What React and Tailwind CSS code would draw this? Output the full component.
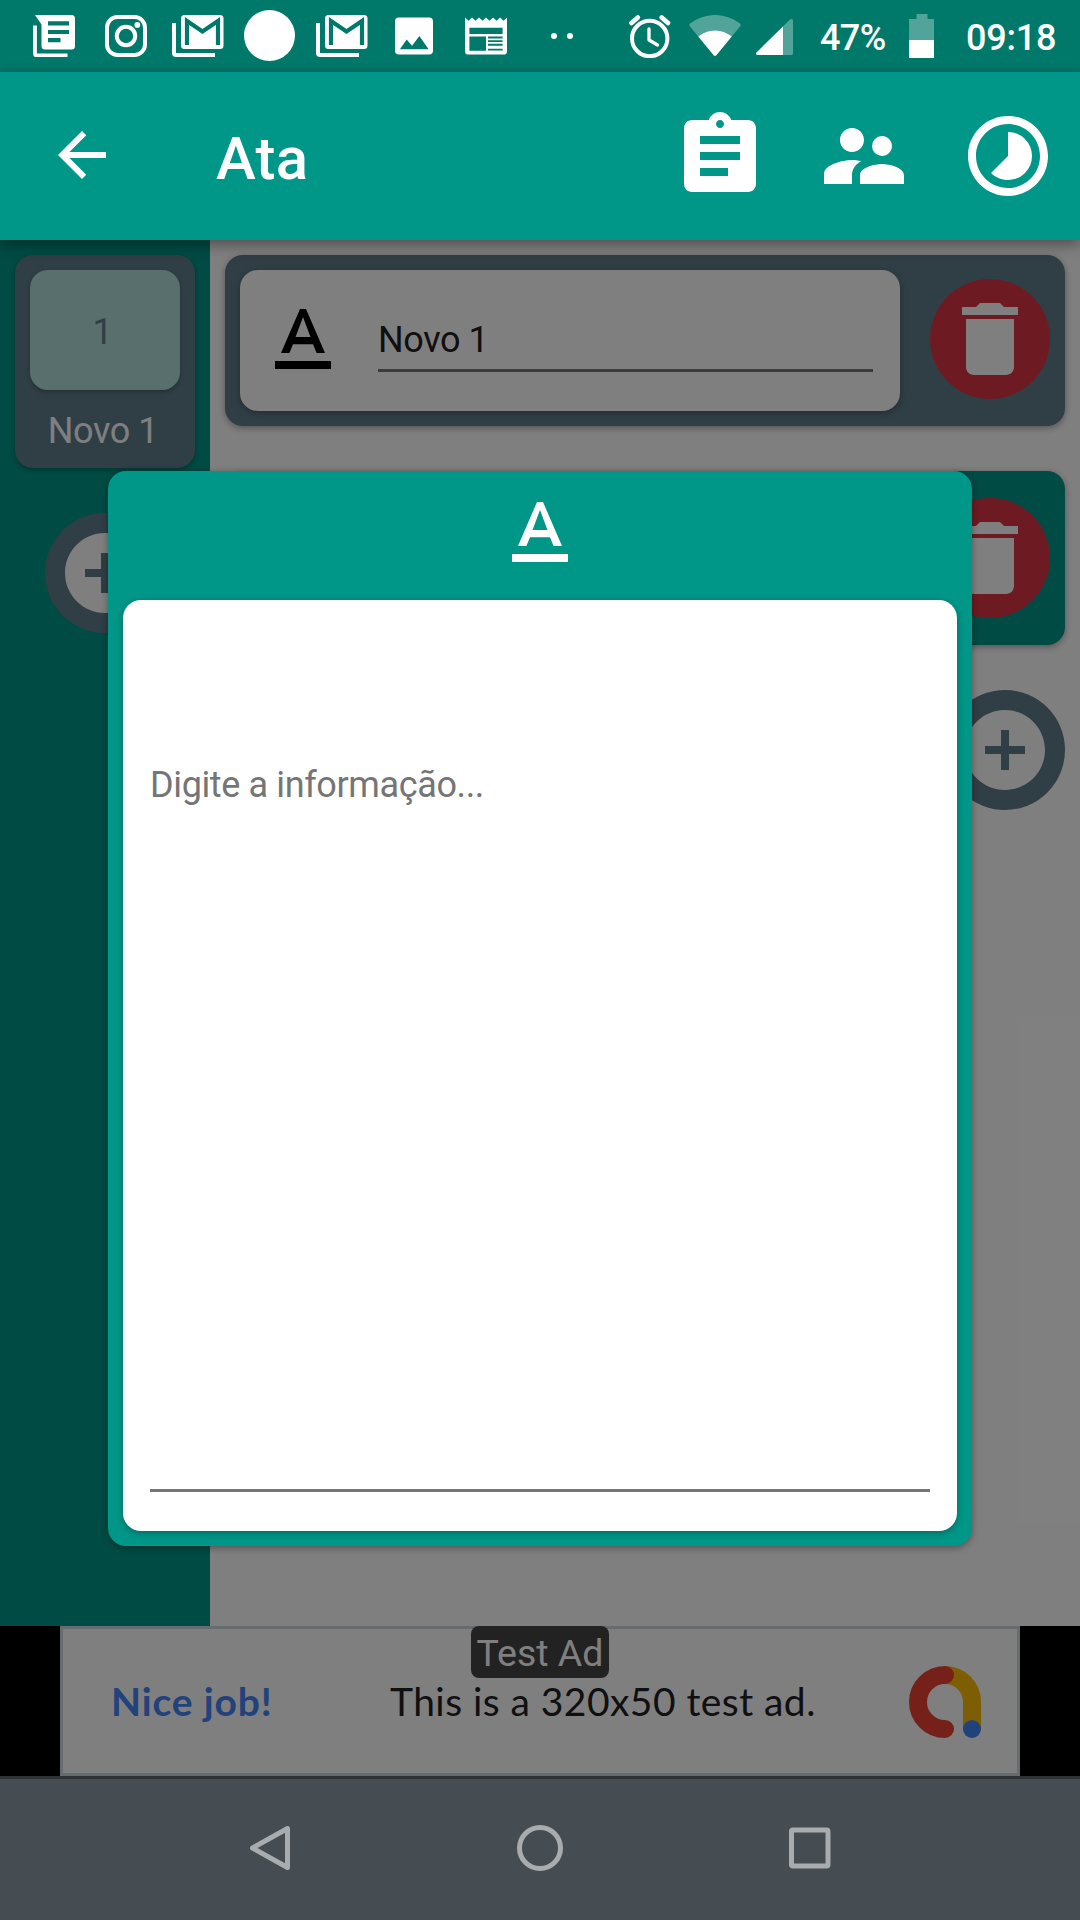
import React from "react";
import {
  MdArrowBack,
  MdAssignment,
  MdSupervisorAccount,
  MdTimelapse,
  MdTextFormat,
  MdDelete,
  MdAddCircle,
} from "react-icons/md";

function GmailIcon() {
  return (
    <svg className="h-[42px] w-[52px]" viewBox="0 0 52 42">
      <path d="M2 8v30a2 2 0 0 0 2 2h39" fill="none" stroke="#fff" strokeWidth="4" />
      <rect x="9" y="0" width="42.500" height="34" rx="3.5" fill="#fff" />
      <path d="M15 30V6l15.500 10.500L46 6v24" fill="none" stroke="#00796b" strokeWidth="4.200" />
    </svg>
  );
}

function StatusBar() {
  return (
    <header className="flex h-[72px] shrink-0 items-center bg-[#00796b] text-white">
      <div className="ml-[33px] flex h-full w-[475px] items-center">
        <svg className="h-[42px] w-[42px] shrink-0" viewBox="0 0 42 42">
          <path d="M2 10.500v28a2 2 0 0 0 2 2h30.500" fill="none" stroke="#fff" strokeWidth="3.800" />
          <path d="M2 0H38.500a3.500 3.500 0 0 1 3.500 3.500V31a3.500 3.500 0 0 1-3.500 3.500H12A3.500 3.500 0 0 1 8.500 31V9.500z" fill="#fff" />
          <path d="M15 8.300h21M15 17h21M15 25.200h12.500" stroke="#00796b" strokeWidth="4.200" />
        </svg>
        <svg className="ml-[30px] h-[42px] w-[42px] shrink-0" viewBox="0 0 42 42">
          <rect x="2" y="2" width="38" height="38" rx="10.500" fill="none" stroke="#fff" strokeWidth="4" />
          <circle cx="21" cy="21" r="9.200" fill="none" stroke="#fff" strokeWidth="4" />
          <circle cx="32.300" cy="9.900" r="2.900" fill="#fff" />
        </svg>
        <div className="ml-[25px] shrink-0"><GmailIcon /></div>
        <div className="-mt-[1px] ml-[20px] h-[51px] w-[51px] shrink-0 rounded-full bg-white" />
        <div className="ml-[21px] shrink-0"><GmailIcon /></div>
        <svg className="ml-[27px] h-[38px] w-[38px] shrink-0" viewBox="0 0 39 38">
          <rect width="39" height="38" rx="4" fill="#fff" />
          <path d="M5 32.500 12 22.500 17.500 29 25 19 34.500 32.500z" fill="#00796b" />
        </svg>
        <svg className="ml-[32px] h-[38px] w-[42px] shrink-0" viewBox="0 0 43 38">
          <path d="M0 0l3.600 3.400L7.200 0l3.600 3.400L14.400 0 18 3.400 21.500 0l3.600 3.400L28.700 0l3.600 3.400L35.900 0l3.500 3.400L43 0v34.500a3.500 3.500 0 0 1-3.500 3.500h-36A3.500 3.500 0 0 1 0 34.500z" fill="#fff" />
          <path d="M4.500 10.500h34v6.500h-34zM4.500 19.500h17v14.500h-17z" fill="#00796b" />
          <path d="M23.500 20.500h15M23.500 24.300h15M23.500 28h15M23.500 33h15" stroke="#00796b" strokeWidth="1.900" />
        </svg>
      </div>
      <div className="ml-[43px] flex w-[22px] gap-[10px]">
        <div className="h-[6px] w-[6px] shrink-0 rounded-full bg-white" />
        <div className="h-[6px] w-[6px] shrink-0 rounded-full bg-white" />
      </div>
      <svg className="ml-[56px] h-[44px] w-[42px]" viewBox="0 0 42 44">
        <circle cx="20.700" cy="24.500" r="17.700" fill="none" stroke="#fff" strokeWidth="4" />
        <path d="M20 15v11l8.500 5" fill="none" stroke="#fff" strokeWidth="3.300" strokeLinecap="round" strokeLinejoin="round" />
        <path d="M2.500 9 8.800 3.500M39 9 32.700 3.500" stroke="#fff" strokeWidth="4.600" strokeLinecap="round" />
      </svg>
      <svg className="-mt-[2px] ml-[18px] h-[41px] w-[52px]" viewBox="0 0 52 41">
        <path d="M1 11.500a2 2 0 0 1 .3-3.200C17-2.800 35-2.800 50.700 8.300a2 2 0 0 1 .3 3.200L27.500 40a2 2 0 0 1-3 0z" fill="#fff" fillOpacity=".32" />
        <path d="M9.300 21.500C19 13.500 33 13.500 42.700 21.500L27.500 40a2 2 0 0 1-3 0z" fill="#fff" />
      </svg>
      <svg className="mt-[2px] ml-[15px] h-[38px] w-[38px]" viewBox="0 0 38 38">
        <path d="M1.800 37a1.500 1.500 0 0 1-1-2.800L34 1.500Q37 0 37 3v32.500a1.500 1.500 0 0 1-1.500 1.500z" fill="#fff" fillOpacity=".32" />
        <path d="M1.800 37a1.500 1.500 0 0 1-1-2.800L27 8.500V37z" fill="#fff" />
      </svg>
      <span className="ml-[26px] mt-[4px] w-[67px] text-[36px] font-medium leading-none tracking-[-0.6px]">47%</span>
      <svg className="ml-[22px] h-[44px] w-[25px]" viewBox="0 0 25 44">
        <path d="M7.500 0h11v5H25v21H0V5h7.500z" fill="#fff" fillOpacity=".32" />
        <path d="M0 26h25v18H0z" fill="#fff" />
      </svg>
      <span className="ml-[32px] mt-[4px] text-[36px] font-medium leading-none tracking-[-0.2px]">09:18</span>
    </header>
  );
}

function AppBar() {
  return (
    <div className="relative z-10 flex h-[168px] shrink-0 items-center bg-[#009688] pr-6 text-white shadow-[0_4px_14px_rgba(0,0,0,0.4)]">
      <MdArrowBack className="mb-[2px] ml-[46px] h-[72px] w-[72px]" />
      <h1 className="ml-[98px] mt-[5px] text-[60px] font-medium leading-none tracking-[0.3px]">Ata</h1>
      <div className="ml-auto flex gap-12">
        <MdAssignment className="h-24 w-24" />
        <MdSupervisorAccount className="h-24 w-24" />
        <MdTimelapse className="h-24 w-24" />
      </div>
    </div>
  );
}

function DeleteButton() {
  return (
    <button className="h-[120px] w-[120px] shrink-0 rounded-full bg-[#dc3545] p-3 text-white">
      <MdDelete className="h-24 w-24" />
    </button>
  );
}

function AddButton() {
  return (
    <button className="h-[120px] w-[120px] shrink-0 rounded-full bg-[#607d8b] p-3 text-white">
      <MdAddCircle className="h-24 w-24" />
    </button>
  );
}

function Sidebar() {
  return (
    <aside className="flex w-[210px] shrink-0 flex-col items-center bg-[#009688] pt-[15px]">
      <div className="flex h-[213px] w-[180px] flex-col items-center rounded-[18px] bg-[#607d8b] pt-[15px] shadow-[0_2px_5px_rgba(0,0,0,0.3)]">
        <div className="flex h-[120px] w-[150px] items-center justify-center rounded-[18px] bg-[#b2dfdb] pr-[5px] pt-[4px] text-[36px] leading-none text-[#607d8b] shadow-[0_2px_4px_rgba(0,0,0,0.25)]">
          1
        </div>
        <span className="mt-[23px] pr-[4px] text-[36px] leading-none tracking-[-0.4px] text-white">Novo 1</span>
      </div>
      <div className="mt-[45px]">
        <AddButton />
      </div>
    </aside>
  );
}

function Content() {
  return (
    <main className="flex flex-1 flex-col bg-white px-[15px] pt-[15px]">
      <div className="flex h-[171px] shrink-0 rounded-[18px] bg-[#607d8b] p-[15px] shadow-[0_2px_7px_rgba(0,0,0,0.35)]">
        <div className="flex w-[660px] items-center rounded-[18px] bg-white pl-[15px] shadow-[0_2px_7px_rgba(0,0,0,0.3)]">
          <MdTextFormat className="h-24 w-24 shrink-0 text-black" />
          <div className="ml-[27px] mt-[3px] h-[60px] w-[495px] border-b-3 border-[#767676] pt-[10px] text-[36px] leading-none tracking-[-0.4px] text-[#212121]">
            Novo 1
          </div>
        </div>
        <div className="ml-[30px] mt-[9px]">
          <DeleteButton />
        </div>
      </div>
      <div className="mt-[45px] flex h-[174px] shrink-0 justify-end rounded-[18px] bg-[#009688] pr-[15px] pt-[27px] shadow-[0_2px_7px_rgba(0,0,0,0.35)]">
        <DeleteButton />
      </div>
      <div className="mt-[45px] flex justify-end">
        <AddButton />
      </div>
    </main>
  );
}

function AdBanner() {
  return (
    <div className="flex h-[150px] shrink-0 justify-center bg-black">
      <div className="relative flex w-[960px] border-3 border-[#cfd8dc] bg-white font-['Lato',sans-serif] text-[39px] leading-none">
        <span className="ml-[48px] mt-[53px] w-[279px] font-bold tracking-[0.85px] text-[#4285f4]">Nice job!</span>
        <span className="mt-[53px] whitespace-nowrap tracking-[0.45px] text-[#202124]">This is a 320x50 test ad.</span>
        <div className="absolute left-[408px] top-[-3px] flex h-[52px] w-[138px] items-center justify-center rounded-[8px] bg-[#444] pt-[4px] font-['Roboto',sans-serif] text-[37.5px] text-white">
          Test Ad
        </div>
        <svg className="ml-auto mr-[34px] mt-[34px] h-[76px] w-[76px]" viewBox="0 0 76 76">
          <path d="M38 12a27 27 0 0 1 27 27v27" fill="none" stroke="#fbbc04" strokeWidth="18" />
          <path d="M38 12a27 27 0 0 0 0 54" fill="none" stroke="#ea4335" strokeWidth="18" strokeLinecap="round" />
          <circle cx="65" cy="66" r="9" fill="#4285f4" />
        </svg>
      </div>
    </div>
  );
}

function EntryDialog() {
  return (
    <section className="flex h-[1075px] w-[864px] flex-col items-center rounded-[18px] bg-[#009688] px-[15px] pb-[15px] pt-[15px] shadow-[0_2px_7px_rgba(0,0,0,0.35)]">
      <MdTextFormat className="h-24 w-24 shrink-0 text-white" />
      <div className="mt-[18px] flex w-full flex-1 flex-col rounded-[18px] bg-white px-[27px] pb-[39px] shadow-[0_2px_7px_rgba(0,0,0,0.3)]">
        <div className="flex-1 border-b-3 border-[#757575] pt-[167px] text-[36px] leading-none tracking-[-0.37px] text-[#757575]">
          Digite a informação...
        </div>
      </div>
    </section>
  );
}

function NavBar() {
  return (
    <nav className="flex h-[144px] shrink-0 justify-between border-t-3 border-[#2c3235] bg-[#454d52] px-[246px] pt-[45px]">
      <svg className="h-12 w-12" viewBox="0 0 48 48" fill="none" stroke="#a8acae" strokeWidth="5" strokeLinejoin="round">
        <path d="M41.500 4.500v39L6.500 24z" />
      </svg>
      <svg className="h-12 w-12" viewBox="0 0 48 48" fill="none" stroke="#a8acae" strokeWidth="5">
        <circle cx="24" cy="24" r="20.500" />
      </svg>
      <svg className="h-12 w-12" viewBox="0 0 48 48" fill="none" stroke="#a8acae" strokeWidth="5">
        <rect x="5.500" y="6" width="36.500" height="36" rx="1.500" />
      </svg>
    </nav>
  );
}

export default function App() {
  return (
    <div className="flex h-[1920px] w-[1080px] flex-col overflow-hidden font-['Roboto',sans-serif]">
      <StatusBar />
      <AppBar />
      <div className="relative flex flex-1 flex-col">
        <div className="flex flex-1">
          <Sidebar />
          <Content />
        </div>
        <AdBanner />
        <div className="absolute inset-0 flex justify-center bg-black/50 pt-[231px]">
          <EntryDialog />
        </div>
      </div>
      <NavBar />
    </div>
  );
}
